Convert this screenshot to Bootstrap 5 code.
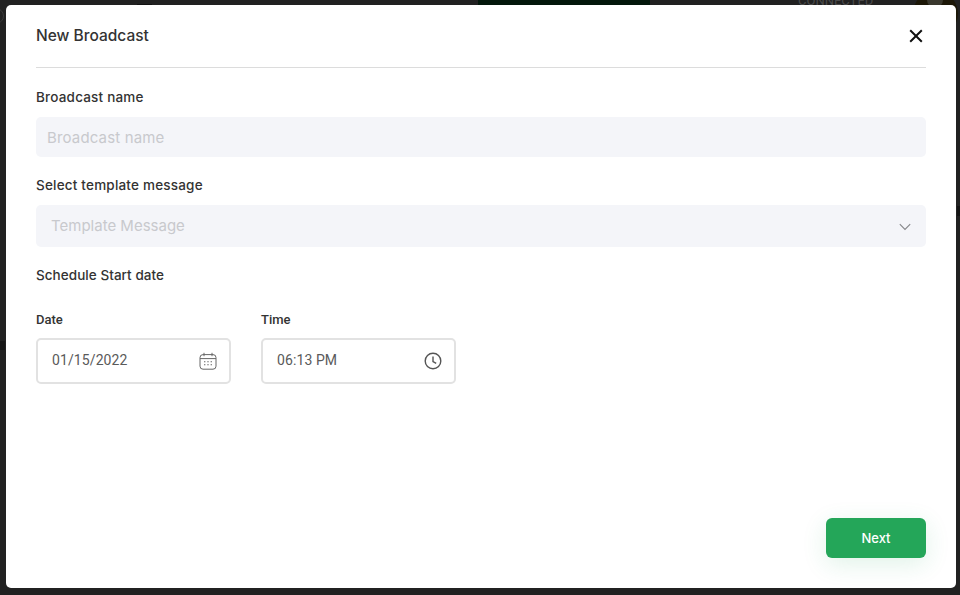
<!DOCTYPE html>
<html lang="en">
<head>
<meta charset="utf-8">
<title>New Broadcast</title>
<link href="https://cdn.jsdelivr.net/npm/bootstrap@5.3.0/dist/css/bootstrap.min.css" rel="stylesheet">
<style>
html,body{height:100%;}
body{background:#212121;overflow:hidden;font-family:"Inter","Liberation Sans",sans-serif;position:relative;}
.back-green{position:absolute;left:478px;top:0;width:172px;height:5px;background:#03170b;}
.back-text{position:absolute;left:798px;top:-7px;font:400 13px/16px Roboto,sans-serif;color:#4a4a4a;}
.back-disc{position:absolute;left:913px;top:-9px;width:45px;height:45px;border-radius:50%;background:#1c1707;}
.back-spot{position:absolute;left:927px;top:-8px;width:16px;height:16px;border-radius:50%;background:#3a382e;}
.back-ring{position:absolute;left:-12px;top:8px;width:16px;height:16px;border-radius:50%;border:1px solid #3a3a3a;}
.back-blob{position:absolute;left:137px;top:4px;width:15px;height:1px;background:#111;}
.back-mark-r{position:absolute;left:957px;top:206px;width:3px;height:10px;background:#141414;}
.back-mark-l{position:absolute;left:0;top:341px;width:5px;height:9px;background:#161616;}
.shell{position:relative;height:595px;padding:5px 4px 7px 6px;}
.sheet{height:583px;background:#fff;border-radius:5px;padding:0 30px 30px;display:flex;flex-direction:column;}
.sheet-head{height:63px;border-bottom:1px solid #dcdcdc;}
.sheet-title{font-size:15.5px;font-weight:500;color:#333;margin:0;}
.x-btn{border:0;background:none;padding:0;width:16px;height:16px;display:flex;color:#111;margin-right:2px;}
.fld-label{font-size:13.5px;font-weight:500;color:#333;line-height:20px;margin:0;letter-spacing:.2px;}
.gap-name{margin-top:19px;}
.gap-field{margin-top:18px;}
.gap-date{margin-bottom:27px;letter-spacing:.05px;}
.soft-input{display:block;width:100%;height:40px;margin-top:10px;background:#f4f5f9;border:0;border-radius:5px;padding:0 11px;font-size:15px;letter-spacing:.15px;color:#333;}
.soft-input::placeholder{color:#c8c9cd;opacity:1;}
.soft-select{height:42px;margin-top:10px;background:#f4f5f9;border-radius:5px;padding:1px 15px 0;font-size:15px;color:#c8c9cd;}
.sm-label{font:500 13px/16px Roboto,sans-serif;color:#333;margin:0 0 10px;}
.pick{width:195px;height:46px;border:2px solid #e2e2e2;border-radius:5px;padding:0 13px 0 14px;font:400 14px/1 Roboto,sans-serif;color:#5a5a5a;letter-spacing:.1px;}
.pick-val{margin-top:-2px;}
.pick-date{padding-right:12px;}
.pick-time{padding-right:12px;}
.time-col{margin-left:30px;}
.go-btn{width:100px;height:40px;background:#24a659;border:0;border-radius:6px;color:#fff;font:500 13px/1 Inter,sans-serif;box-shadow:0 6px 24px rgba(36,166,89,.14);}
.go-btn:hover{background:#24a659;color:#fff;}
</style>
</head>
<body>
<div class="back-green"></div>
<div class="back-text">CONNECTED</div>
<div class="back-disc"></div>
<div class="back-spot"></div>
<div class="back-ring"></div>
<div class="back-blob"></div>
<div class="back-mark-r"></div>
<div class="back-mark-l"></div>
<div class="shell">
  <div class="sheet">
    <div class="sheet-head d-flex align-items-center justify-content-between">
      <h5 class="sheet-title">New Broadcast</h5>
      <button class="x-btn" type="button" aria-label="Close">
        <svg width="16" height="16" viewBox="0 0 16 16"><path d="M2.2 2.2l11.6 11.6M13.8 2.2L2.2 13.8" stroke="currentColor" stroke-width="2" fill="none"/></svg>
      </button>
    </div>
    <label class="fld-label gap-name" for="bn">Broadcast name</label>
    <input id="bn" class="soft-input" type="text" placeholder="Broadcast name">
    <p class="fld-label gap-field">Select template message</p>
    <div class="soft-select d-flex align-items-center justify-content-between">
      <span>Template Message</span>
      <svg width="12" height="8" viewBox="0 0 12 8"><path d="M.8 1.2L6 6.4l5.2-5.2" stroke="#85868a" stroke-width="1.1" fill="none"/></svg>
    </div>
    <p class="fld-label gap-field gap-date">Schedule Start date</p>
    <div class="d-flex">
      <div>
        <p class="sm-label">Date</p>
        <div class="pick pick-date d-flex align-items-center justify-content-between">
          <span class="pick-val">01/15/2022</span>
          <svg width="18" height="18" viewBox="0 0 18 18" fill="none" stroke="#666" stroke-width="1"><rect x="1" y="2.6" width="16" height="14.6" rx="3"/><path d="M1 6.6h16M5 .8v3.4M13 .8v3.4"/><path d="M5 9.8h1.4M8.3 9.8h1.4M11.6 9.8h1.4M5 12.8h1.4M8.3 12.8h1.4M11.6 12.8h1.4" stroke-width="1.1"/></svg>
        </div>
      </div>
      <div class="time-col">
        <p class="sm-label">Time</p>
        <div class="pick pick-time d-flex align-items-center justify-content-between">
          <span class="pick-val">06:13 PM</span>
          <svg width="18" height="18" viewBox="0 0 18 18" fill="none" stroke="#555" stroke-width="1.4"><circle cx="9" cy="9" r="7.8"/><path d="M9 4.6V9.6l3.2 1.8"/></svg>
        </div>
      </div>
    </div>
    <div class="mt-auto d-flex justify-content-end">
      <button class="btn go-btn" type="button">Next</button>
    </div>
  </div>
</div>
<script src="https://cdn.jsdelivr.net/npm/bootstrap@5.3.0/dist/js/bootstrap.bundle.min.js"></script>
</body>
</html>
